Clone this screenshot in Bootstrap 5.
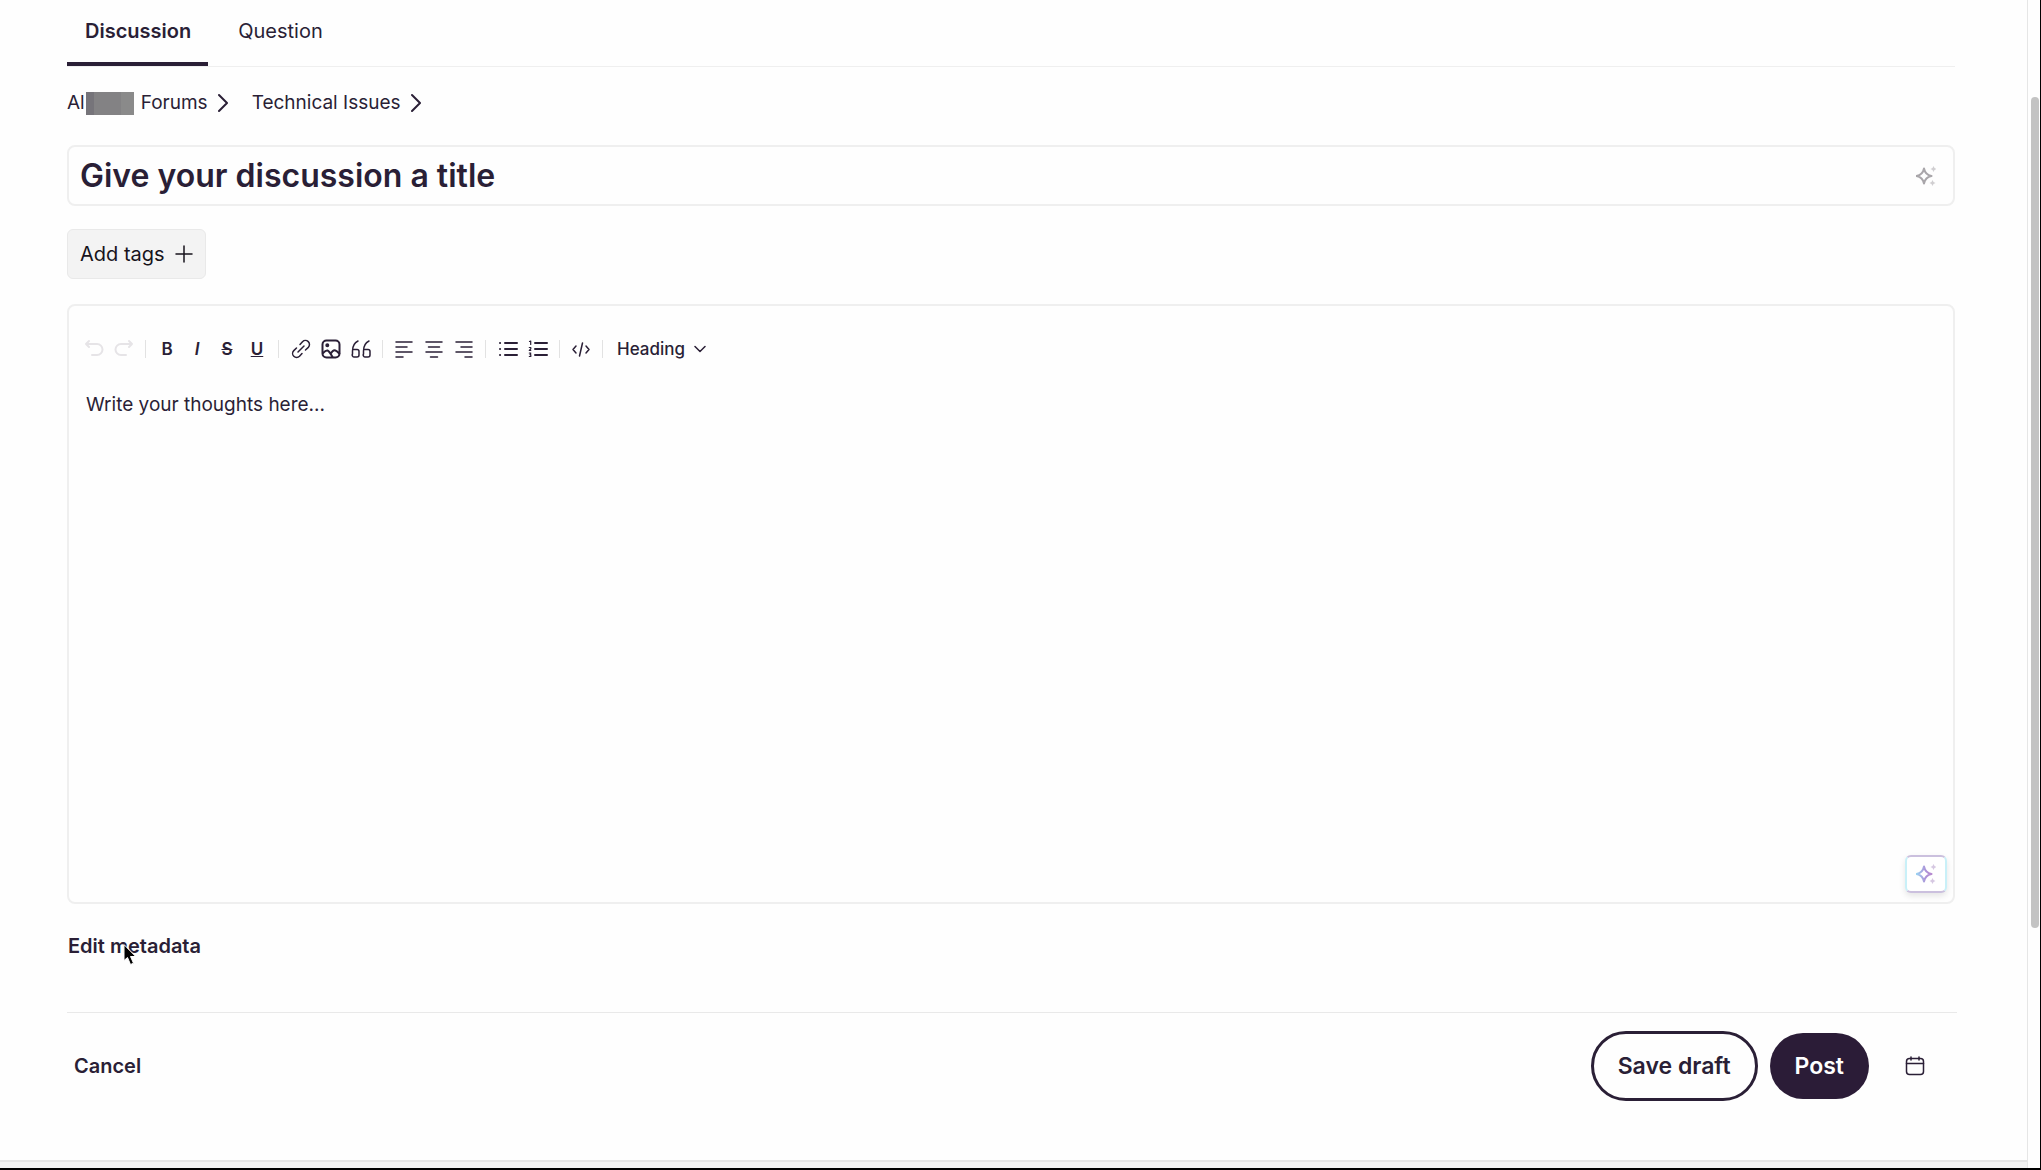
<!DOCTYPE html>
<html lang="en">
<head>
<meta charset="utf-8">
<meta name="viewport" content="width=device-width, initial-scale=1">
<title>New discussion</title>
<link href="https://cdn.jsdelivr.net/npm/bootstrap@5.3.0/dist/css/bootstrap.min.css" rel="stylesheet">
<style>
:root{--ink:#2a1f36;--rule:#efefef}
body{font-family:Inter,"Liberation Sans",sans-serif;font-size:20px;line-height:28px;color:var(--ink);background:#fefefe}
svg{fill:none;stroke:currentColor;stroke-width:2;stroke-linecap:round;stroke-linejoin:round;display:block}
.thin{stroke-width:1.5}
.shell{border-right:1px solid #000;border-bottom:2px solid #000}
.sheet{padding:0 72px 0 67px}
.footband{height:8px;background:#f2f2f2;border-top:2px solid #e4e4e4}
.rail{width:13px;background:#fefefe;border-left:1px solid #e6e6e6;padding:97px 1px 0 3px}
.rail-thumb{height:831px;border-radius:4px;background:#c3c3c3}
.kind-tabs{border-bottom:1px solid var(--rule);height:67px}
.kind-tabs .nav-link{color:var(--ink);padding:17px 17px 17px 18px;border-bottom:4px solid transparent;margin-right:12px}
.kind-tabs .nav-link.active{font-weight:600;border-color:var(--ink)}
.trail{height:78px;padding-bottom:6px}
.trail a,.plain-btn{color:var(--ink);text-decoration:none}
.trail .trail-item{gap:10px;margin-right:24px}
.trail,.compose{font-size:19px}
.masked{width:48px;height:23px;margin:0 7px 0 1px;background:linear-gradient(90deg,#76747a 8px,#838284 8px 35px,#8a8a8a 35px)}
.title-box{border:2px solid var(--rule);border-radius:8px;height:61px;padding:0 17px 0 11px}
.title-box input{font-size:32px;line-height:40px;font-weight:600;border:0;outline:0;background:none;color:var(--ink);padding:0}
.title-box input::placeholder,.compose::placeholder{color:var(--ink);opacity:1}
.title-box button{color:#a9a6aa}
.bare{border:0;background:none;padding:0;color:inherit}
.tags-btn{background:#f3f3f3;border:1px solid #e9e9e9;border-radius:6px;height:50px;padding:0 12px;gap:10px;color:#17131c;margin:23px 0 25px}
.editor{border:2px solid var(--rule);border-radius:8px;min-height:320px}
.tools{padding:28px 10px 0}
.tool{width:30px;height:30px;font-size:17px;line-height:24px;font-weight:600;color:var(--ink)}
.tool:disabled{color:#e6e4e7}
.split{width:1px;height:18px;margin:0 6px;background:#e2e2e2}
.split-wide{margin-right:7px}
.heading-pick{appearance:none;border:0;outline:0;font-size:17px;line-height:24px;font-weight:500;color:var(--ink);background:none;padding:0 32px 0 8px;margin-right:-24px}
.pick-arrow{pointer-events:none}
.compose{border:0;outline:0;resize:none;background:none;color:var(--ink);padding:27px 17px 0;line-height:28px}
.ai-btn{right:6px;bottom:9px;width:42px;height:38px;border:2px solid #cbc0de;border-left-color:#c9f0f8;border-right-color:#c9f0f8;border-radius:6px;background:#fff;box-shadow:0 3px 6px #0000001a;padding:0}
.meta-row{padding:28px 0 52px 1px}
.plain-btn{font-weight:600;border:0;background:none;padding:0}
.actions{border-top:1px solid #e9e9e9;padding:18px 32px 59px 7px;margin-right:-2px}
.pill{border-radius:36px;font-size:23px;font-weight:600;line-height:34px;border:0}
.pill-line{border:3px solid var(--ink);color:var(--ink);padding:15px 24px;background:none}
.pill-solid{background:#2b1c37;color:#fff;padding:16px 25px;margin:0 36px 0 12px}
.pointer{left:56px;top:40px}
</style>
</head>
<body>
<div class="shell d-flex min-vh-100">
 <div class="flex-grow-1 d-flex flex-column">
  <main class="sheet flex-grow-1 d-flex flex-column">
   <ul class="kind-tabs nav flex-nowrap">
    <li class="nav-item"><a class="nav-link active" href="#">Discussion</a></li>
    <li class="nav-item"><a class="nav-link" href="#">Question</a></li>
   </ul>
   <nav class="trail d-flex align-items-center" aria-label="Breadcrumb">
    <div class="trail-item d-flex align-items-center">
     <a class="d-flex align-items-center" href="#">Al<span class="masked"></span>Forums</a>
     <svg width="10" height="20" viewBox="0 0 10 20"><path d="M1 2l8 8-8 8"/></svg>
    </div>
    <div class="trail-item d-flex align-items-center">
     <a href="#">Technical Issues</a>
     <svg width="10" height="20" viewBox="0 0 10 20"><path d="M1 2l8 8-8 8"/></svg>
    </div>
   </nav>
   <div class="title-box d-flex align-items-center">
    <input class="flex-grow-1" type="text" placeholder="Give your discussion a title" aria-label="Discussion title">
    <button class="bare" type="button" aria-label="Suggest a title">
     <svg width="20" height="20" viewBox="0 0 20 20"><path d="M8 2.500Q9.200 8.800 15.500 10Q9.200 11.200 8 17.500Q6.800 11.200 .5 10Q6.800 8.800 8 2.500Z"/><path stroke="none" fill="#d0ced1" d="M17.500 0l1 2 2 1-2 1-1 2-1-2-2-1 2-1zM16.500 14l1 2 2 1-2 1-1 2-1-2-2-1 2-1z"/></svg>
    </button>
   </div>
   <button class="tags-btn align-self-start d-flex align-items-center" type="button">Add tags
    <svg class="thin" width="18" height="18" viewBox="0 0 18 18"><path d="M9 1v16M1 9h16"/></svg>
   </button>
   <section class="editor flex-grow-1 d-flex flex-column position-relative">
    <div class="tools d-flex align-items-center" role="toolbar" aria-label="Formatting">
     <button class="tool bare d-flex align-items-center justify-content-center" disabled aria-label="Undo"><svg width="20" height="20" viewBox="0 0 20 20"><path d="M5 2L2 5l3 3M2 5h11a5.500 5.500 0 0 1 0 11H8"/></svg></button>
     <button class="tool bare d-flex align-items-center justify-content-center" disabled aria-label="Redo"><svg width="20" height="20" viewBox="0 0 20 20"><path d="M15 2l3 3-3 3M18 5H7a5.500 5.500 0 0 0 0 11h5"/></svg></button>
     <span class="split"></span>
     <button class="tool bare">B</button>
     <button class="tool bare fst-italic">I</button>
     <button class="tool bare text-decoration-line-through">S</button>
     <button class="tool bare text-decoration-underline">U</button>
     <span class="split split-wide"></span>
     <button class="tool bare d-flex align-items-center justify-content-center" aria-label="Link"><svg class="thin" width="20" height="20" viewBox="0 0 20 20"><path d="M7 13l6-6M9 5.500l2.500-2.800a4 4 0 0 1 5.800 5.700L14.500 11M5.500 9L2.800 11.600a4 4 0 0 0 5.700 5.700L11 14.600"/></svg></button>
     <button class="tool bare d-flex align-items-center justify-content-center" aria-label="Image"><svg width="20" height="20" viewBox="0 0 20 20"><rect x="1.500" y="1.500" width="17" height="17" rx="4"/><circle cx="6.300" cy="6.300" r="1" fill="currentColor"/><path d="M2 14c4-4 5-4 9.500 4M9.800 14.500c2.500-4.500 4.500-4.500 8.500 0"/></svg></button>
     <button class="tool bare d-flex align-items-center justify-content-center" aria-label="Quote"><svg class="thin" width="20" height="20" viewBox="0 0 20 20"><path d="M7 2C3 4 1.500 7 1.500 12v3a2 2 0 0 0 2 3H6a2 2 0 0 0 2-2v-3.500a2 2 0 0 0-2-2H2M18 2c-4 2-5.500 5-5.500 10v3a2 2 0 0 0 2 3H17a2 2 0 0 0 2-2v-3.500a2 2 0 0 0-2-2h-4"/></svg></button>
     <span class="split"></span>
     <button class="tool bare d-flex align-items-center justify-content-center" aria-label="Align left"><svg class="thin" width="18" height="18" viewBox="0 0 18 18"><path d="M1 2h16M1 7h11M1 12h16M1 17h7"/></svg></button>
     <button class="tool bare d-flex align-items-center justify-content-center" aria-label="Align centre"><svg class="thin" width="18" height="18" viewBox="0 0 18 18"><path d="M1 2h16M3.500 7h11M1 12h16M5.500 17h7"/></svg></button>
     <button class="tool bare d-flex align-items-center justify-content-center" aria-label="Align right"><svg class="thin" width="18" height="18" viewBox="0 0 18 18"><path d="M1 2h16M6 7h11M1 12h16M10 17h7"/></svg></button>
     <span class="split split-wide"></span>
     <button class="tool bare d-flex align-items-center justify-content-center" aria-label="Bulleted list"><svg width="20" height="18" viewBox="0 0 20 18"><path d="M7 3h12M7 9h12M7 15h12M2 3h.1M2 9h.1M2 15h.1"/></svg></button>
     <button class="tool bare d-flex align-items-center justify-content-center" aria-label="Numbered list"><svg width="20" height="18" viewBox="0 0 20 18"><path d="M7 3h12M7 9h12M7 15h12"/><path stroke-width="1.200" d="M1.500 1.500L2.700 1v3.500M1.300 7.500h1.500v1.300L1.300 10.500h1.500M1.300 13h1.500L2 14.700h.8v1.800H1.300"/></svg></button>
     <span class="split"></span>
     <button class="tool bare d-flex align-items-center justify-content-center" aria-label="Code"><svg class="thin" width="18" height="18" viewBox="0 0 18 18"><path d="M4 6L1 9.500 4 13M14 6l3 3.500-3 3.500M10.500 3l-3 13"/></svg></button>
     <span class="split"></span>
     <select class="heading-pick" aria-label="Text style"><option>Heading</option></select>
     <svg class="pick-arrow thin" width="12" height="8" viewBox="0 0 12 8"><path d="M1 1.500l5 5 5-5"/></svg>
    </div>
    <textarea class="compose flex-grow-1 w-100" placeholder="Write your thoughts here..." aria-label="Body"></textarea>
    <button class="ai-btn position-absolute d-flex align-items-center justify-content-center" type="button" aria-label="Writing assistant">
     <svg width="20" height="20" viewBox="0 0 20 20"><defs><linearGradient id="glow"><stop stop-color="#9bd3f2"/><stop offset=".6" stop-color="#ad93d8"/><stop offset="1" stop-color="#b78bd0"/></linearGradient></defs><path stroke="url(#glow)" d="M8 2.500Q9.200 8.800 15.500 10Q9.200 11.200 8 17.500Q6.800 11.200 .5 10Q6.800 8.800 8 2.500Z"/><path stroke="none" fill="#d6c8e2" d="M17.500 0l1 2 2 1-2 1-1 2-1-2-2-1 2-1zM16.500 14l1 2 2 1-2 1-1 2-1-2-2-1 2-1z"/></svg>
    </button>
   </section>
   <div class="meta-row position-relative">
    <button class="plain-btn d-block" type="button">Edit metadata</button>
    <svg class="pointer position-absolute" width="14" height="22" viewBox="0 0 14 22"><path style="stroke-width:1" d="M1 1v15.500l3.500-3 3 7 3-1.300-3-6.700h5z" fill="#000" stroke="#fff"/></svg>
   </div>
   <div class="actions d-flex align-items-center">
    <button class="plain-btn me-auto" type="button">Cancel</button>
    <button class="pill pill-line" type="button">Save draft</button>
    <button class="pill pill-solid" type="button">Post</button>
    <button class="bare" type="button" aria-label="Schedule"><svg class="thin" width="20" height="20" viewBox="0 0 20 20"><rect x="1.500" y="2.500" width="17" height="16" rx="3"/><path d="M1.500 7.500h17M6 1v3M14 1v3"/></svg></button>
   </div>
  </main>
  <div class="footband"></div>
 </div>
 <div class="rail"><div class="rail-thumb"></div></div>
</div>
<script src="https://cdn.jsdelivr.net/npm/bootstrap@5.3.0/dist/js/bootstrap.bundle.min.js"></script>
</body>
</html>
